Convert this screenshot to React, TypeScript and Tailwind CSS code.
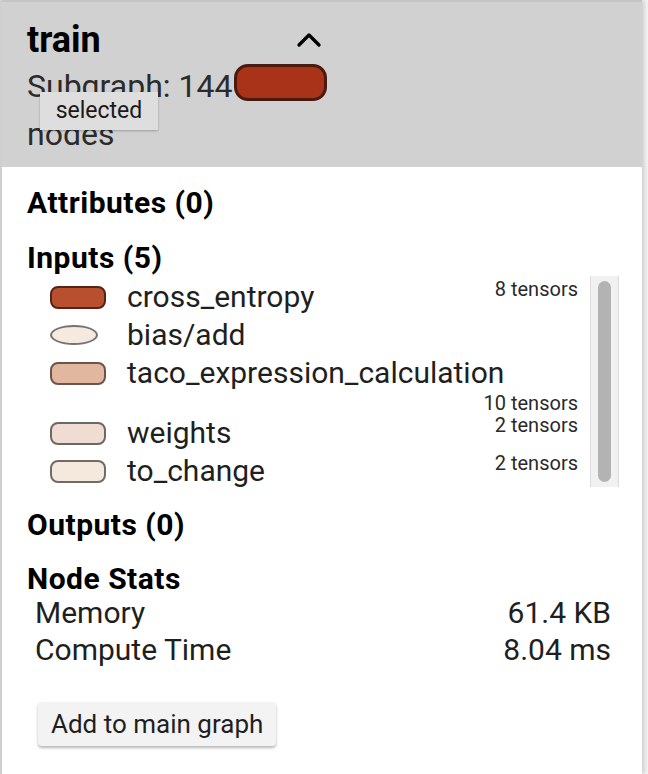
import { ChevronUp } from "lucide-react";

type Input = {
  name: string;
  tensors?: string;
  shape: "rect" | "ellipse";
  fill: string;
  stroke: string;
};

const inputs: Input[] = [
  { name: "cross_entropy", tensors: "8 tensors", shape: "rect", fill: "#b8502f", stroke: "#55231a" },
  { name: "bias/add", shape: "ellipse", fill: "#f6e9e0", stroke: "#757270" },
  { name: "taco_expression_calculation", tensors: "10 tensors", shape: "rect", fill: "#e2b79f", stroke: "#6c544b" },
  { name: "weights", tensors: "2 tensors", shape: "rect", fill: "#efdcd2", stroke: "#6f6762" },
  { name: "to_change", tensors: "2 tensors", shape: "rect", fill: "#f5e9de", stroke: "#6f6b67" },
];

function NodeIcon({ shape, fill, stroke }: Pick<Input, "shape" | "fill" | "stroke">) {
  if (shape === "ellipse") {
    return (
      <div className="w-[56px] flex shrink-0">
        <div
          className="w-[48px] h-[20px] rounded-[50%] border-[2.5px]"
          style={{ background: fill, borderColor: stroke }}
        />
      </div>
    );
  }
  return (
    <div
      className="w-[56px] h-[23px] rounded-[8px] border-[2.5px] shrink-0"
      style={{ background: fill, borderColor: stroke }}
    />
  );
}

export default function App() {
  return (
    <div
      className="w-[648px] h-[774px] bg-[#f4f4f4] overflow-hidden"
      style={{ fontFamily: "Roboto, 'Liberation Sans', sans-serif" }}
    >
      <div className="w-[642px] h-full bg-white border-l-2 border-[#cfcfcf] shadow-[2px_0_5px_rgba(0,0,0,0.18)] flex flex-col">
        {/* header */}
        <div className="relative bg-[#d1d1d1] border-t-2 border-[#c5c5c5] pl-[25px] pt-[16px] pb-[9px] text-[#2b2b2b]">
          <div className="flex items-center w-[302px] justify-between">
            <span className="text-[36px] leading-[44px] font-bold text-black">train</span>
            <ChevronUp className="size-10 text-black" strokeWidth={2} />
          </div>
          <div className="flex items-center text-[32px] leading-[48px]">
            <span>Subgraph: 144</span>
            <span className="ml-[2px] -mt-[7px] w-[93px] h-[37px] rounded-[14px] bg-[#a83318] border-[3.5px] border-[#4a1a0f]" />
          </div>
          <div className="text-[32px] leading-[48px]">nodes</div>
          <div className="absolute left-[38px] top-[90px] w-[118px] h-[38px] bg-[#dedede] shadow-[0_1px_2px_rgba(0,0,0,0.25)] flex items-center justify-center text-[23px] text-[#1a1a1a]">
            selected
          </div>
        </div>

        <div className="pl-[25px] pr-[23px] text-[#1f1f1f]">
          <div className="mt-[18px] text-[30px] leading-[36px] font-bold tracking-[0.5px] text-black">Attributes (0)</div>
          <div className="mt-[19px] text-[30px] leading-[36px] font-bold tracking-[0.5px] text-black">Inputs (5)</div>

          <div className="flex mt-0">
            <div className="flex-1 pt-[2px] pl-[23px] pr-[2px]">
              {inputs.map((it) => (
                <div key={it.name} className="flex flex-wrap items-start">
                  <div className="flex items-center h-[38px] gap-[21px]">
                    <NodeIcon shape={it.shape} fill={it.fill} stroke={it.stroke} />
                    <span className="text-[30px] leading-[38px]">{it.name}</span>
                  </div>
                  {it.tensors && (
                    <span className="ml-auto text-[20px] leading-[22px] text-[#2a2a2a]">{it.tensors}</span>
                  )}
                </div>
              ))}
            </div>
            <div className="ml-[10px] w-[29px] h-[211px] bg-[#f1f1f1] border-x border-[#dcdcdc] px-[7px] py-[5px]">
              <div className="w-full h-full rounded-full bg-[#b3b3b3]" />
            </div>
          </div>

          <div className="mt-[17px] text-[30px] leading-[36px] font-bold tracking-[0.5px] text-black">Outputs (0)</div>
          <div className="mt-[18px] text-[30px] leading-[36px] font-bold tracking-[0.5px] text-black">Node Stats</div>
          <div className="-mt-[3px] pl-[8px] pr-[8px] text-[30px]">
            <div className="flex justify-between leading-[37px]">
              <span>Memory</span>
              <span>61.4 KB</span>
            </div>
            <div className="flex justify-between leading-[37px]">
              <span>Compute Time</span>
              <span>8.04 ms</span>
            </div>
          </div>

          <button className="mt-[34px] ml-[11px] h-[44px] px-[13px] bg-[#f3f3f3] rounded-[4px] shadow-[0_2px_3px_rgba(0,0,0,0.28)] text-[26px] text-[#1f1f1f]">
            Add to main graph
          </button>
        </div>
      </div>
    </div>
  );
}
